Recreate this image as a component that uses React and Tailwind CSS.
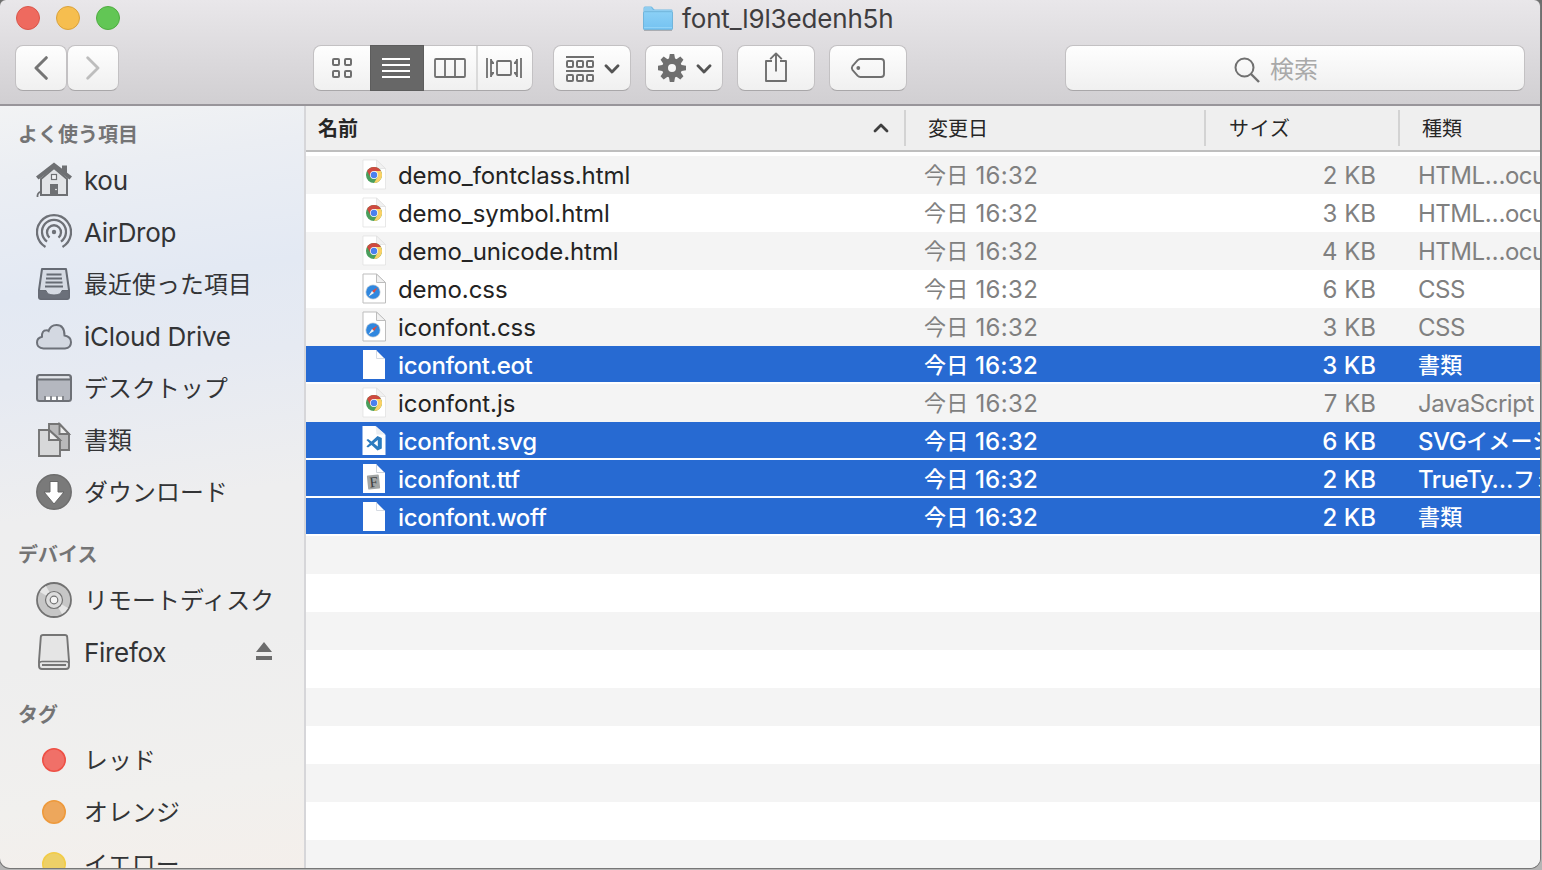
import React from "react";
import clsx from "clsx";

const CJK = /([\u3000-\u30ff\u4e00-\u9fff]+)/;

/* Japanese runs are set slightly smaller than the Latin text beside them. */
function Mixed({ children }) {
  return children.split(CJK).filter(Boolean).map((run, i) =>
    CJK.test(run) ? (
      <span key={i} className="relative -top-px text-[0.917em] tracking-[0.007em]">{run}</span>
    ) : (
      <span key={i}>{run}</span>
    )
  );
}

/* ---------- toolbar ---------- */

function Light({ className }) {
  return <span className={clsx("size-6 rounded-full border", className)} />;
}

function Button({ className, children }) {
  return (
    <div
      className={clsx(
        "flex h-[46px] items-center rounded-[8px] border border-[#c3c1c3] border-b-[#a9a7a9] bg-linear-to-b from-[#fefefe] to-[#f0f0f0]",
        className
      )}
    >
      {children}
    </div>
  );
}

function Folder() {
  return (
    <svg width="32" height="26" viewBox="0 0 32 26" className="shrink-0">
      <defs>
        <linearGradient id="folder" x1="0" y1="0" x2="0" y2="1">
          <stop offset="0" stopColor="#8bd0f6" />
          <stop offset="1" stopColor="#74c2f1" />
        </linearGradient>
      </defs>
      <path d="M1.5 24V3.2Q1.5 1.5 3 1.5H9Q10 1.5 10.6 2.4L11.6 3.8Q12 4.5 13 4.5H29.5Q30.5 4.5 30.5 5.5V24Z" fill="#6fb9e4" />
      <path d="M2 7V3.4Q2 2 3.2 2H9L11 5H29.5Q30 5 30 6V9H2Z" fill="#8fcdf0" />
      <rect x="1.5" y="6.7" width="29" height="18" rx="1" fill="url(#folder)" stroke="#68aed7" strokeWidth=".8" />
      <path d="M2 22.5H30" stroke="#91d3f7" />
      <path d="M2 25.4H30" stroke="#9a9ba0" strokeWidth=".8" />
    </svg>
  );
}

function GridIcon() {
  return (
    <svg width="22" height="22" fill="none" stroke="#6f6f6f" strokeWidth="2">
      {[2, 14].map((y) => [2, 14].map((x) => <rect key={`${x}-${y}`} x={x} y={y} width="6" height="6" rx="1" />))}
    </svg>
  );
}

function ListIcon() {
  return (
    <svg width="28" height="22" stroke="#fff" strokeWidth="2">
      <path d="M0 2H28M0 8H28M0 14H28M0 20H28" />
    </svg>
  );
}

function ColumnsIcon() {
  return (
    <svg width="32" height="20" fill="none" stroke="#6f6f6f" strokeWidth="1.8">
      <rect x="1" y="1" width="30" height="18" rx="1" />
      <path d="M11 1V19M21 1V19" />
    </svg>
  );
}

function CoverflowIcon() {
  return (
    <svg width="36" height="20" fill="none" stroke="#6f6f6f" strokeWidth="1.8">
      <path d="M1 0V20M35 0V20" />
      <path d="M5 1V19M31 1V19" />
      <path d="M5 1L8 4.5V6H5ZM5 19L8 15.5V14H5ZM31 1L28 4.5V6H31ZM31 19L28 15.5V14H31Z" fill="#6f6f6f" stroke="none" />
      <rect x="11" y="3" width="14" height="14" rx="1" />
    </svg>
  );
}

function ArrangeIcon() {
  return (
    <svg width="28" height="26" fill="none" stroke="#6f6f6f" strokeWidth="2" className="mt-0.5">
      <path d="M0 1H28M0 15H28" />
      {[5, 19].map((y) => [1, 11, 21].map((x) => <rect key={`${x}-${y}`} x={x} y={y} width="6" height="6" rx="1" />))}
    </svg>
  );
}

function GearIcon() {
  return (
    <svg width="28" height="28" viewBox="-14 -14 28 28" fill="#6f6f6f">
      <circle r="7" fill="none" stroke="#6f6f6f" strokeWidth="6" />
      {[0, 45, 90, 135, 180, 225, 270, 315].map((a) => (
        <path key={a} d="M-3.2 -8.5L-2.2 -14H2.2L3.2 -8.5Z" transform={`rotate(${a})`} />
      ))}
    </svg>
  );
}

function DownChevron() {
  return (
    <svg width="16" height="10" fill="none" stroke="#545454" strokeWidth="2.8" strokeLinecap="round" strokeLinejoin="round" className="mt-px">
      <path d="M2 1.8L8 8L14 1.8" />
    </svg>
  );
}

function ShareIcon() {
  return (
    <svg width="24" height="32" fill="none" stroke="#6f6f6f" strokeWidth="1.9" strokeLinejoin="round">
      <path d="M8 9H2V29H22V9H16" />
      <path d="M12 19.5V1.4M6.2 7.2L12 1.4L17.8 7.2" />
    </svg>
  );
}

function TagIcon() {
  return (
    <svg width="36" height="22" fill="none" stroke="#6f6f6f" strokeWidth="1.9" strokeLinejoin="round">
      <path d="M10.5 2H31Q34 2 34 5V17Q34 20 31 20H10.5Q8.8 20 7.5 18.6L2.4 12.8Q1.2 11 2.4 9.2L7.5 3.4Q8.8 2 10.5 2Z" />
      <circle cx="8.3" cy="11" r="1.9" fill="#6f6f6f" stroke="none" />
    </svg>
  );
}

function Toolbar() {
  return (
    <header className="h-[106px] shrink-0 border-b-2 border-b-[#98959a] bg-linear-to-b from-[#e9e7ea] to-[#d1cfd2]">
      <div className="flex h-[45px] items-start">
        <div className="flex gap-4 pt-1.5 pl-4">
          <Light className="border-[#d9564b] bg-[#ee6a5f]" />
          <Light className="border-[#d9a23c] bg-[#f6be4f]" />
          <Light className="border-[#4fac40] bg-[#62c655]" />
        </div>
        <div className="ml-[522px] flex items-start pt-[5px]">
          <Folder />
          <h1 className="ml-2 text-[26px] leading-7 tracking-[-0.006em] text-[#3f3d40]">font_l9l3edenh5h</h1>
        </div>
      </div>
      <div className="flex pl-[15px]">
        <Button className="w-[52px] justify-center">
          <svg width="14" height="24" fill="none" stroke="#757575" strokeWidth="3" strokeLinecap="round" strokeLinejoin="round">
            <path d="M12.3 1.7L2 12L12.3 22.3" />
          </svg>
        </Button>
        <Button className="w-[52px] justify-center">
          <svg width="14" height="24" fill="none" stroke="#bdbdbd" strokeWidth="2.8" strokeLinecap="round" strokeLinejoin="round">
            <path d="M1.7 1.7L12 12L1.7 22.3" />
          </svg>
        </Button>
        <Button className="ml-[194px] w-[220px]">
          <div className="flex h-full w-[56px] items-center justify-center"><GridIcon /></div>
          <div className="-my-px flex h-[46px] w-[54px] items-center border border-[#5d5d5d] bg-[#676767] pl-[11px]"><ListIcon /></div>
          <div className="flex h-full w-[54px] items-center justify-center border-r-2 border-[#dadada]"><ColumnsIcon /></div>
          <div className="flex h-full w-[54px] items-center pl-2"><CoverflowIcon /></div>
        </Button>
        <Button className="ml-5 w-[78px] gap-[10px] pl-3"><ArrangeIcon /><DownChevron /></Button>
        <Button className="ml-[14px] w-[78px] gap-[10px] pl-3"><GearIcon /><DownChevron /></Button>
        <Button className="ml-[14px] w-[78px] justify-center"><ShareIcon /></Button>
        <Button className="ml-[14px] w-[78px] justify-center"><TagIcon /></Button>
        <Button className="ml-[158px] w-[460px] pt-[3px] pl-[168px]">
          <svg width="26" height="26" fill="none" stroke="#707070" strokeWidth="2">
            <circle cx="10.5" cy="10.5" r="9" />
            <path d="M17 17L25 25" strokeWidth="2.4" />
          </svg>
          <span className="ml-[10px] text-[24px] leading-6 text-[#a9a9a9]">検索</span>
        </Button>
      </div>
    </header>
  );
}

/* ---------- sidebar ---------- */

const line = { fill: "none", stroke: "#6e7177", strokeWidth: 2.3 };

const SIDE_ICONS = {
  home: (
    <g>
      <path d="M26 3.5H31V14L26 10Z" fill="#6e7073" />
      <path d="M5 17L18 6L31 17V33H5Z" fill="#e2e4e7" stroke="#6e7073" strokeWidth="2" />
      <path d="M0 14.5L18 0.5L36 14.5L33.5 17.5L18 6L2.5 17.5Z" fill="#6e7073" />
      <rect x="15.5" y="12.5" width="5" height="5" fill="#f2f3f5" stroke="#6e7073" strokeWidth="1.2" />
      <rect x="14" y="22" width="8" height="11" fill="#6e7073" />
      <circle cx="20" cy="27.5" r=".8" fill="#fff" />
      <path d="M1.5 35Q1 31 5 29.5" fill="none" stroke="#6e7073" strokeWidth="1.8" />
    </g>
  ),
  airdrop: (
    <g {...line}>
      <path d="M9.5 32.9A17 17 0 1 1 26.5 32.9" />
      <path d="M11 27.6A12 12 0 1 1 25 27.6" />
      <path d="M13.5 23.6A7 7 0 1 1 22.5 23.6" />
      <circle cx="18" cy="18" r="2.2" fill="#6e7177" stroke="none" />
    </g>
  ),
  recents: (
    <g>
      <path d="M6 3H30L33 24V31Q33 33 31 33H5Q3 33 3 31V24Z" fill="#d5dae3" stroke="#666b74" strokeWidth="2" strokeLinejoin="round" />
      <path d="M3 24.5H10Q11 29 18 29Q25 29 26 24.5H33V31Q33 33 31 33H5Q3 33 3 31Z" fill="#6b707a" stroke="#666b74" />
      <path d="M10.5 8.5H25.5M10 12.5H26M9.5 16.5H26.5M9 20.5H27" stroke="#666b74" strokeWidth="1.8" />
    </g>
  ),
  cloud: (
    <path d="M7.5 30.5Q1 30 1 24.5Q1 20 6 18.8Q5.5 12.5 10.5 12.3Q11.5 12.2 12.6 13Q14.5 7 20.5 7Q28.5 7 28.5 17.5Q35 18.5 35 24.3Q35 30 29 30.5Z" fill="#d3d8e1" stroke="#6d7179" strokeWidth="2" />
  ),
  desktop: (
    <g>
      <rect x="1" y="5" width="34" height="26" rx="2.5" fill="#b4b7bf" stroke="#6d7076" strokeWidth="2" />
      <path d="M2 9.5H34" stroke="#6d7076" strokeWidth="2" />
      <path d="M3 7.2H33" stroke="#e3e5ea" strokeWidth="2" />
      <path d="M8 30V26H28V30Z" fill="#85888e" />
      <path d="M10 30V26.5H14V30ZM16 30V26.5H20V30ZM22 30V26.5H26V30Z" fill="#fff" />
    </g>
  ),
  docs: (
    <g stroke="#757575" strokeWidth="1.9">
      <path d="M13 2H23.5L33 12V28H13Z" fill="#b9b9ba" />
      <path d="M23.5 2V12H33Z" fill="#eee" />
      <path d="M3 8H13L24 18V34H3Z" fill="#d7d8d9" />
      <path d="M13 8V18H24Z" fill="#eee" />
    </g>
  ),
  download: (
    <g>
      <circle cx="18" cy="18" r="17.2" fill="#7a7a7a" stroke="#6e6e6e" strokeWidth="1.5" />
      <path d="M14 7.5H22V18H28L18 30L8 18H14Z" fill="#fff" stroke="#666" strokeWidth="1" />
    </g>
  ),
  disc: (
    <g stroke="#727272">
      <circle cx="18" cy="18" r="17" fill="#c6c6c6" strokeWidth="1.8" />
      <path d="M18 18L4 10Q6 6 10 4ZM18 18L32 26Q30 30 26 32Z" fill="#e6e6e6" stroke="none" />
      <circle cx="18" cy="18" r="8.5" fill="#dcdcdc" strokeWidth="1.2" />
      <circle cx="18" cy="18" r="3.8" fill="#f4f4f4" strokeWidth="1.2" />
    </g>
  ),
  drive: (
    <g stroke="#757575" strokeWidth="1.9">
      <path d="M7 1H29Q31 1 31.2 3L33 27V32Q33 35 30 35H6Q3 35 3 32V27L4.8 3Q5 1 7 1Z" fill="#e5e5e5" />
      <path d="M3.5 29Q4 27.5 6 27.5H30Q32 27.5 32.5 29" fill="none" strokeWidth="1.4" />
      <path d="M6 31H30" strokeWidth="2" />
    </g>
  ),
};

const dot = (fill, stroke) => <circle cx="18" cy="18" r="11.2" fill={fill} stroke={stroke} strokeWidth="1.6" />;

function SideItem({ icon, label, eject }) {
  return (
    <li className="flex h-[52px] shrink-0 items-center pr-8 pl-9">
      <svg width="36" height="36" className="-mt-0.5 shrink-0">{icon}</svg>
      <span className="ml-3 grow whitespace-nowrap text-[26px] leading-8 tracking-[-0.012em] text-[#333436]">
        <Mixed>{label}</Mixed>
      </span>
      {eject && (
        <svg width="16" height="18" fill="#6c6c6c" className="-mt-[5px] shrink-0">
          <path d="M8 0L16 10H0ZM0 14H16V18H0Z" />
        </svg>
      )}
    </li>
  );
}

function SideHeading({ children, first }) {
  return (
    <h2 className={clsx("shrink-0 pl-[18px] text-[20px] leading-10 font-bold text-[#747475]", first ? "h-[49px] pt-[9px]" : "h-14 pt-4")}>
      {children}
    </h2>
  );
}

function Sidebar() {
  return (
    <nav className="flex w-[306px] shrink-0 flex-col overflow-hidden border-r-2 border-[#d6d6d9] bg-[linear-gradient(172deg,#f2f3f4_0%,#ebeef3_9%,#e3e9f3_24%,#e6eaf2_35%,#eeeeef_52%,#eeeeee_70%,#f1f0ee_88%,#f4efeb_100%)]">
      <SideHeading first>よく使う項目</SideHeading>
      <ul className="contents">
        <SideItem icon={SIDE_ICONS.home} label="kou" />
        <SideItem icon={SIDE_ICONS.airdrop} label="AirDrop" />
        <SideItem icon={SIDE_ICONS.recents} label="最近使った項目" />
        <SideItem icon={SIDE_ICONS.cloud} label="iCloud Drive" />
        <SideItem icon={SIDE_ICONS.desktop} label="デスクトップ" />
        <SideItem icon={SIDE_ICONS.docs} label="書類" />
        <SideItem icon={SIDE_ICONS.download} label="ダウンロード" />
      </ul>
      <SideHeading>デバイス</SideHeading>
      <ul className="contents">
        <SideItem icon={SIDE_ICONS.disc} label="リモートディスク" />
        <SideItem icon={SIDE_ICONS.drive} label="Firefox" eject />
      </ul>
      <SideHeading>タグ</SideHeading>
      <ul className="contents">
        <SideItem icon={dot("#f07068", "#ee5045")} label="レッド" />
        <SideItem icon={dot("#eda75c", "#ee9a3c")} label="オレンジ" />
        <SideItem icon={dot("#edd067", "#f2cc48")} label="イエロー" />
      </ul>
    </nav>
  );
}

/* ---------- file list ---------- */

function Paper({ faint }) {
  return (
    <g stroke={faint ? "#dedede" : "#bdbdbd"} strokeWidth={faint ? 0.7 : 1}>
      <path d="M2 4H15.5L24.5 13V33H2Z" fill="#fff" />
      <path d="M15.5 4V12.5H24.5Z" fill="#f1f1f1" />
    </g>
  );
}

const FILE_ICONS = {
  chrome: (
    <g>
      <Paper faint />
      <g transform="translate(13 19)">
        <circle r="8" fill="#4a9e5c" />
        <path d="M0 -4H6.93A8 8 0 0 1 0 8L3.5 2Z" fill="#fad165" />
        <path d="M-6.93 -4A8 8 0 0 1 6.93 -4H0L-3.5 2Z" fill="#cf4a40" />
        <circle r="3.9" fill="#fff" />
        <circle r="3.2" fill="#4a80ee" />
      </g>
    </g>
  ),
  safari: (
    <g>
      <Paper />
      <g transform="translate(12 22)">
        <circle r="7.6" fill="#c9d3dc" />
        <circle r="6.8" fill="#2f87df" />
        <path d="M4.5 -4.5L1 1L-1 -1Z" fill="#e5483c" />
        <path d="M-4.5 4.5L1 1L-1 -1Z" fill="#f4f4f4" />
      </g>
    </g>
  ),
  blank: (
    <g>
      <path d="M2 4H15L24 13V33H2Z" fill="#fff" />
      <path d="M15.5 4.5V12.5H23.5" fill="none" stroke="#d6dbe3" />
    </g>
  ),
  vscode: (
    <g>
      <path d="M1.5 4H14.5L24.5 13V33H1.5Z" fill="#fff" />
      <path d="M14.5 4L15.5 12.5H24.5Z" fill="#ebeef2" />
      <path fillRule="evenodd" d="M16.5 14L20.8 16V26.5L16.5 28.5L10.5 23L7 25.6L5.4 24.6L8.8 21.2L5.4 18L7 17L10.5 19.5ZM16.8 18L12.8 21.2L16.8 24.5Z" fill="#2b7bbf" />
    </g>
  ),
  font: (
    <g>
      <path d="M2 4H15L24 13V33H2Z" fill="#fff" />
      <path d="M15.5 4.5V12.5H23.5" fill="none" stroke="#cfd4da" />
      <g transform="rotate(-6 13 22)">
        <rect x="6.5" y="15" width="12" height="14" rx="1" fill="#a3a6a5" />
        <text x="12.7" y="27" textAnchor="middle" fontSize="15" fontFamily="Liberation Serif, serif" fill="#3d403f">F</text>
      </g>
    </g>
  ),
};

const FILES = [
  { name: "demo_fontclass.html", icon: "chrome", size: "2 KB", kind: "HTML…ocument" },
  { name: "demo_symbol.html", icon: "chrome", size: "3 KB", kind: "HTML…ocument" },
  { name: "demo_unicode.html", icon: "chrome", size: "4 KB", kind: "HTML…ocument" },
  { name: "demo.css", icon: "safari", size: "6 KB", kind: "CSS" },
  { name: "iconfont.css", icon: "safari", size: "3 KB", kind: "CSS" },
  { name: "iconfont.eot", icon: "blank", size: "3 KB", kind: "書類", selected: true },
  { name: "iconfont.js", icon: "chrome", size: "7 KB", kind: "JavaScript" },
  { name: "iconfont.svg", icon: "vscode", size: "6 KB", kind: "SVGイメージ", selected: true },
  { name: "iconfont.ttf", icon: "font", size: "2 KB", kind: "TrueTy…フォント", selected: true },
  { name: "iconfont.woff", icon: "blank", size: "2 KB", kind: "書類", selected: true },
];

const COLS = "grid grid-cols-[600px_300px_194px_140px]";

function FileRow({ file, striped }) {
  const { selected } = file;
  return (
    <div
      className={clsx(
        COLS,
        "h-[38px] shrink-0 text-[24px] leading-[40px] whitespace-nowrap",
        selected ? "border-b-2 border-white bg-[#276ad2] font-medium text-white" : "text-[#808080]",
        !selected && (striped ? "bg-[#f4f4f4]" : "bg-white")
      )}
    >
      <div className="flex h-9 pl-[55px]">
        <svg width="26" height="36" className="shrink-0">{FILE_ICONS[file.icon]}</svg>
        <span className={clsx("ml-[11px]", selected ? "tracking-[-0.014em] text-white" : "tracking-[-0.003em] text-[#232323]")}>{file.name}</span>
      </div>
      <div className={clsx("h-9 pl-[18px]", selected ? "tracking-[0.008em]" : "tracking-[0.015em]")}><Mixed>今日 16:32</Mixed></div>
      <div className="h-9 pr-[24px] text-right">{file.size}</div>
      <div className="h-9 overflow-x-clip pl-[18px] tracking-[-0.02em]"><Mixed>{file.kind}</Mixed></div>
    </div>
  );
}

function HeaderCell({ children, className }) {
  return (
    <div className={clsx("my-1 flex h-9 items-center justify-between border-[#d3d3d3]", className)}>
      {children}
    </div>
  );
}

function FileList() {
  return (
    <main className="flex min-w-0 grow flex-col overflow-hidden bg-white">
      <div className={clsx(COLS, "h-[46px] shrink-0 border-b-2 border-[#bebebe] bg-[#efefef] text-[20px] leading-9 text-[#262626]")}>
        <HeaderCell className="border-r-2 pr-[15px] pl-3">
          <span className="pt-0.5 font-bold">名前</span>
          <svg width="16" height="10" fill="none" stroke="#3f3f3f" strokeWidth="2.8" strokeLinecap="round" strokeLinejoin="round">
            <path d="M2 8L8 2L14 8" />
          </svg>
        </HeaderCell>
        <HeaderCell className="border-r-2 pt-0.5 pl-[22px]">変更日</HeaderCell>
        <HeaderCell className="border-r-2 pt-0.5 pl-[23px] tracking-[0.04em]">サイズ</HeaderCell>
        <HeaderCell className="pt-0.5 pl-[22px]">種類</HeaderCell>
      </div>
      <div className="flex flex-col pt-1">
        {FILES.map((file, i) => (
          <FileRow key={file.name} file={file} striped={i % 2 === 0} />
        ))}
        {Array.from({ length: 9 }, (_, i) => (
          <div key={i} className={clsx("h-[38px] shrink-0", i % 2 === 0 ? "bg-[#f4f4f4]" : "bg-white")} />
        ))}
      </div>
    </main>
  );
}

export default function App() {
  return (
    <div className="h-[870px] w-[1542px] overflow-hidden bg-linear-to-b from-[#6d6d6d] via-[#a5a5a5] to-[#b5b5b5] font-[Inter,'Noto_Sans_CJK_JP',sans-serif]">
      <div className="flex h-[868px] w-[1540px] flex-col overflow-hidden rounded-t-[6px] rounded-b-[10px] shadow-[0_0_0_1px_#777]">
        <Toolbar />
        <div className="flex min-h-0 grow">
          <Sidebar />
          <FileList />
        </div>
      </div>
    </div>
  );
}
